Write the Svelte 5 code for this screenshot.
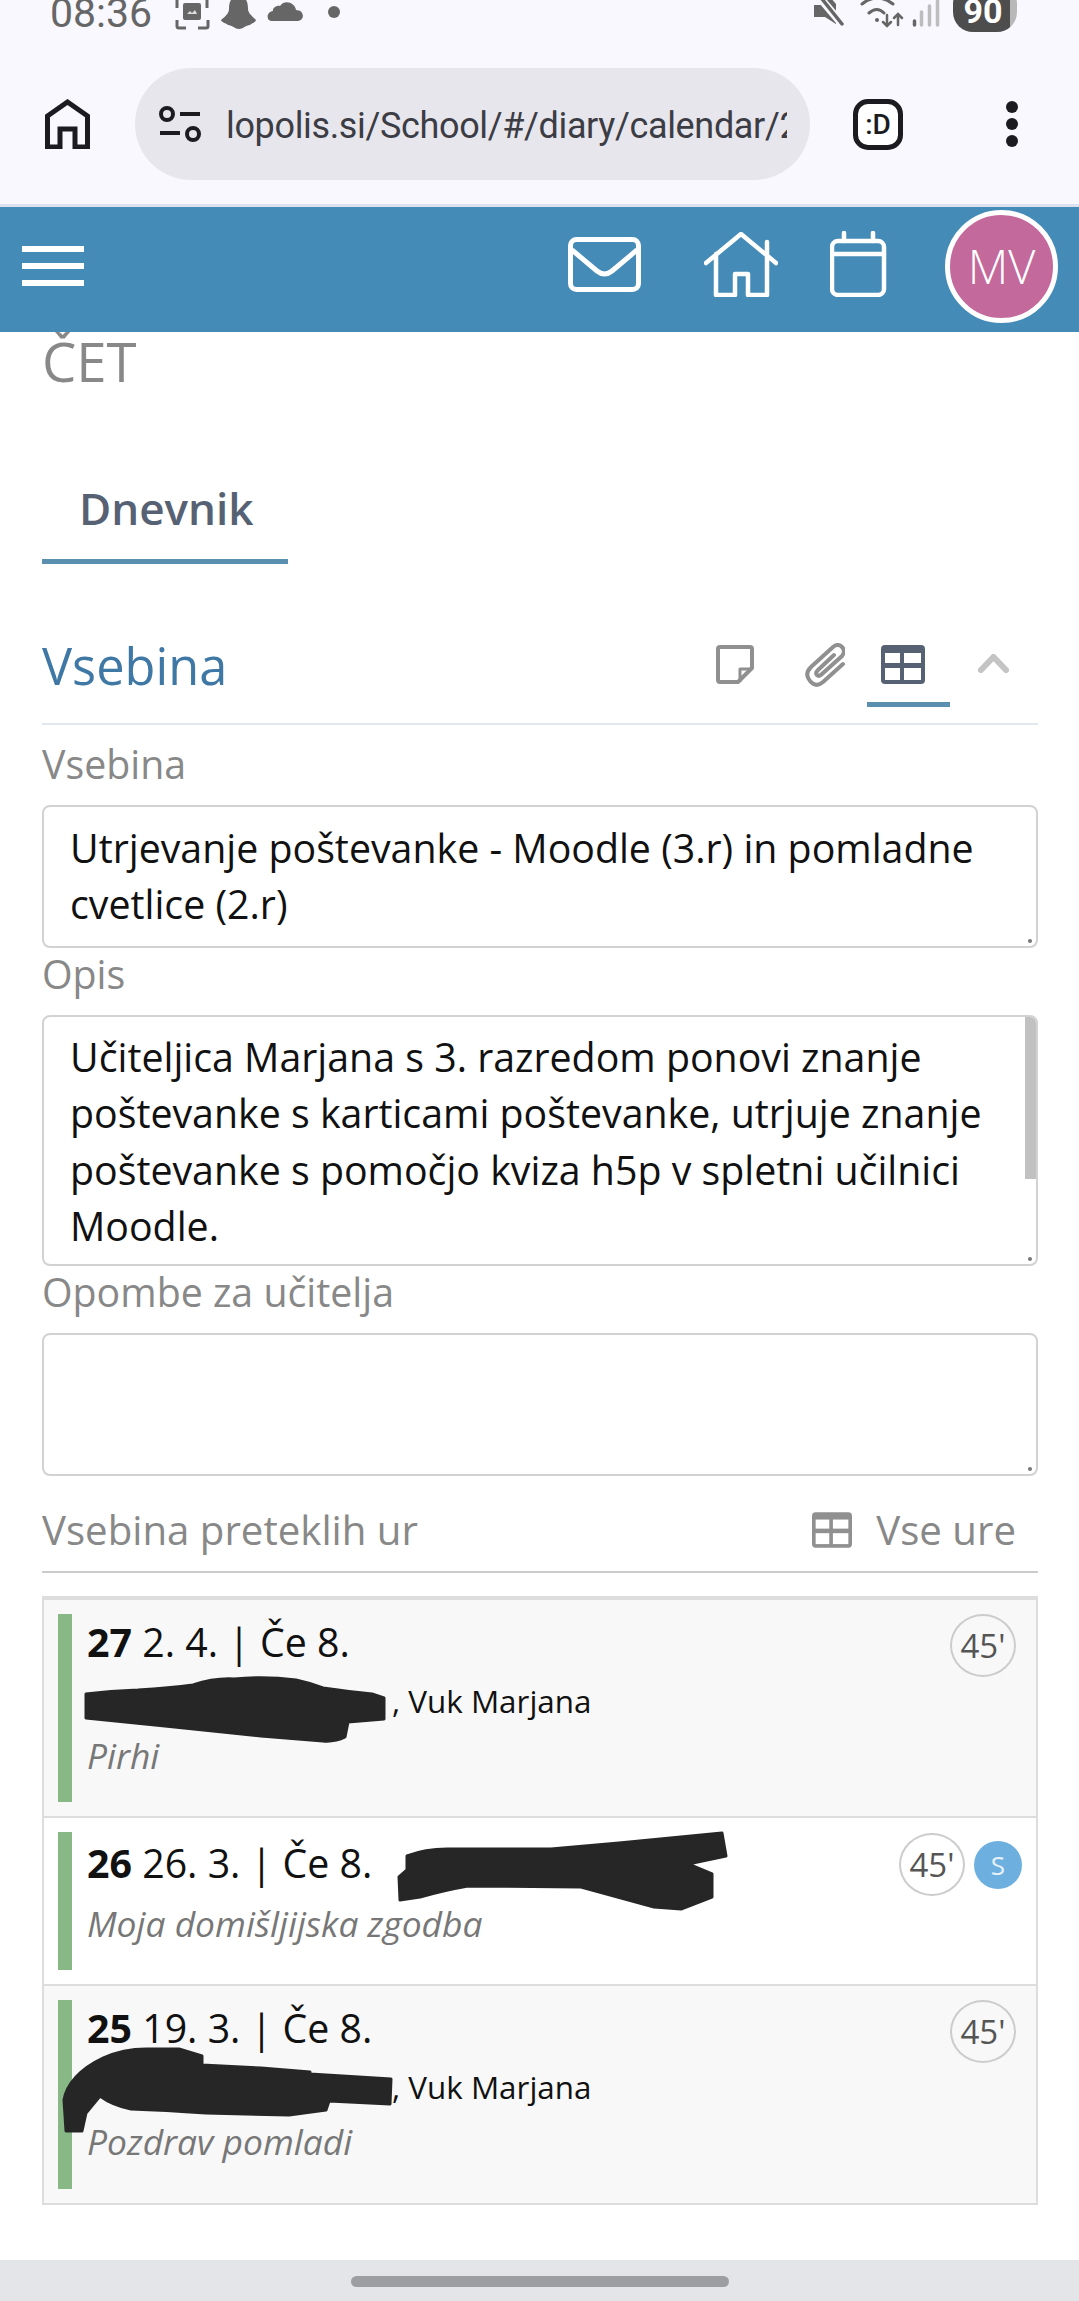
<script lang="ts">
  const lessons = [
    { num: 27, date: '2. 4. | Če 8.', names: ', Vuk Marjana', note: 'Pirhi', tint: true },
    { num: 26, date: '26. 3. | Če 8.', names: '', note: 'Moja domišljijska zgodba', tint: false, sub: true },
    { num: 25, date: '19. 3. | Če 8.', names: ', Vuk Marjana', note: 'Pozdrav pomladi', tint: true },
  ];
</script>

{#snippet gridIcon(cls: string)}
  <svg class={cls} viewBox="0 0 44 39">
    <rect class="grid-bg" width="44" height="39" rx="4" />
    <rect x="4" y="8" width="15" height="10" fill="#fff" />
    <rect x="23" y="8" width="17" height="10" fill="#fff" />
    <rect x="4" y="23" width="15" height="12" fill="#fff" />
    <rect x="23" y="23" width="17" height="12" fill="#fff" />
  </svg>
{/snippet}

<div class="page">
  <div class="chrome">
    <div class="status">
      <span class="time">08:36</span>
      <svg class="st shot" viewBox="175 0 34 29" fill="none" stroke="#666" stroke-width="3">
        <path d="M177 20v6q0 2 2 2h7M198 28h8q2 0 2-2v-6M177 8V0M207 8V0" />
        <rect x="183" y="3" width="18" height="17" rx="2" fill="#666" stroke="none" />
        <path d="M187 14l3-3 2 2 3-3 2 4z" fill="#ddd" stroke="none" />
      </svg>
      <svg class="st snap" viewBox="221 0 35 29">
        <path fill="#666" d="M239-4C231-4 229 2 229 9 229 13 226 16 221 20 222 23 226 23 228 25 232 25 235 29 239 29 243 29 246 25 250 25 252 23 255 23 256 20 252 16 248 13 248 9 248 2 246-4 239-4Z" />
      </svg>
      <svg class="st cloud" viewBox="268 0 35 22">
        <path fill="#666" d="M272 21H297C305 21 305 10 296 10 295 3 285-1 280 6 276 5 272 9 273 11 266 12 266 21 272 21Z" />
      </svg>
      <span class="dot"></span>

      <div class="st-right">
        <svg class="st mute" viewBox="814 0 30 27">
          <path fill="#666" d="M814 5H822L830-3 836 4V24L825 17H814Z" />
          <path d="M820-2 842 24" stroke="#f8f8fe" stroke-width="8" />
          <path d="M822-1 842 24" stroke="#666" stroke-width="3.5" stroke-linecap="round" />
        </svg>
        <svg class="st wifi" viewBox="858 0 44 28" fill="none" stroke="#666" stroke-width="3" stroke-linecap="round">
          <circle cx="877" cy="20" r="2" fill="#666" stroke="none" />
          <path d="M869 13Q877 6 884 13M862 4Q877-8 893 4" />
          <path d="M887 15V26M883 22l4 4 4-4M898 25V15M894 18l4-4 4 4" stroke-width="2.5" />
        </svg>
        <svg class="st signal" viewBox="912 0 28 27" stroke-width="3.5" stroke-linecap="round" fill="none">
          <path d="M914.5 21v4" stroke="#666" />
          <path d="M921.500 12v13M929.500 6v19M937.500 1v24" stroke="#bdbdbd" />
        </svg>
        <span class="battery">90</span>
      </div>
    </div>

    <div class="toolbar">
      <svg class="home" viewBox="45 100 45 50" fill="none" stroke="#1b1b20" stroke-width="5">
        <path d="M47.500 148V117L67.500 103 87.500 117V148H75V130H60V148Z" />
      </svg>
      <div class="omnibox">
        <svg class="tune" viewBox="159 107 42 36" fill="none" stroke="#1b1b20" stroke-width="4">
          <circle cx="167" cy="115" r="6" />
          <circle cx="193" cy="135" r="6" />
          <path d="M180 115H200M160 134H180" />
        </svg>
        <span class="url">lopolis.si/School/#/diary/calendar/2</span>
      </div>
      <span class="ext">:D</span>
      <div class="dots"><i></i><i></i><i></i></div>
    </div>
  </div>

  <header class="topbar">
    <div class="burger"><i></i><i></i><i></i></div>
    <svg class="ic mail" viewBox="568 237 73 55" fill="none" stroke="#fff" stroke-width="5">
      <rect x="570.500" y="239.500" width="68" height="50" rx="6" />
      <path d="M572 250 597 271Q604.500 277 612 271L637 250" />
    </svg>
    <svg class="ic house" viewBox="704 232 74 65" fill="none" stroke="#fff" stroke-width="4.500" stroke-linecap="round" stroke-linejoin="round">
      <path d="M706 263 741 234 776 263M716 254V295H735V274H748V295H767V242" />
    </svg>
    <svg class="ic cal" viewBox="830 231 58 66" fill="none" stroke="#fff" stroke-width="4.500" stroke-linecap="round">
      <rect x="832" y="241" width="52" height="54" rx="6" />
      <path d="M832 254H884M844 233V241M873 233V241" />
    </svg>
    <span class="avatar">MV</span>
  </header>

  <main>
    <h1>ČET</h1>

    <div class="tab">Dnevnik</div>

    <div class="sec-head">
      <h2>Vsebina</h2>
      <div class="tools">
        <svg class="t-note" viewBox="716 645 38 39" fill="none" stroke="#909090" stroke-width="4" stroke-linejoin="round">
          <path d="M718 649q0-2 2-2h30q2 0 2 2V668L738 682H720q-2 0-2-2Z" />
          <path d="M752 669H740V682" stroke-width="3" />
        </svg>
        <svg class="t-clip" viewBox="805 643 40 44" fill="none" stroke="#909090" stroke-width="4" stroke-linecap="round">
          <path d="M843 664 823 682Q816 688 810 681 804 674 811 667L833 647Q838 643 842 647 846 651 842 656L822 674Q819 677 817 675 815 673 818 670L834 655" />
        </svg>
        <div class="t-grid">{@render gridIcon('grid-dark')}</div>
        <svg class="t-chev" viewBox="978 654 31 19" fill="none" stroke="#c4c4c4" stroke-width="6" stroke-linecap="round">
          <path d="M981 670 993.500 657 1006 670" />
        </svg>
      </div>
    </div>

    <div class="label first">Vsebina</div>
    <div class="box b1">
      Utrjevanje poštevanke - Moodle (3.r) in pomladne cvetlice (2.r)
      <span class="grip"></span>
    </div>

    <div class="label">Opis</div>
    <div class="box b2">
      Učiteljica Marjana s 3. razredom ponovi znanje poštevanke s karticami poštevanke, utrjuje znanje poštevanke s pomočjo kviza h5p v spletni učilnici Moodle.
      <span class="thumb"></span>
      <span class="grip"></span>
    </div>

    <div class="label">Opombe za učitelja</div>
    <div class="box b1"><span class="grip"></span></div>

    <div class="past-head">
      <span>Vsebina preteklih ur</span>
      <div class="all">
        {@render gridIcon('grid-grey')}
        <span>Vse ure</span>
      </div>
    </div>

    <div class="list">
      {#each lessons as l}
        <div class="row" class:tint={l.tint} class:short={!l.names}>
          <span class="bar"></span>
          <div class="info">
            <div class="title"><b>{l.num}</b> {l.date}</div>
            {#if l.names}
              <div class="names"><span class="hidden-name"></span>{l.names}</div>
            {/if}
            <div class="note">{l.note}</div>
          </div>
          <div class="marks" class:has-sub={l.sub}>
            <span class="mins">45'</span>
            {#if l.sub}<span class="sub">S</span>{/if}
          </div>
        </div>
      {/each}
    </div>
  </main>

  <div class="navbar"><span class="pill"></span></div>

  <!-- marker scribbles drawn over the screenshot -->
  <svg class="scribbles" viewBox="0 0 1079 2301" fill="#262626" stroke="#262626" stroke-width="3" stroke-linejoin="round">
    <path d="M86 1694Q110 1691 138 1690 170 1688 193 1685 214 1678 234 1679 265 1676 296 1680 310 1683 323 1688 350 1692 372 1694L384 1698V1719L348 1722 345 1737Q335 1742 323 1741L261 1736 165 1726 86 1718Z" />
    <path d="M407 1856Q425 1849 447 1849H551L619 1843 722 1833 726 1856 688 1864 712 1874V1897L681 1909 654 1907 581 1887 468 1886Q445 1890 420 1897L400 1900 399 1877 407 1870Z" />
    <path d="M64 2100Q66 2088 76 2077 86 2066 103 2058 125 2048 151 2049H179L202 2056V2065L261 2068 310 2072V2074L391 2079 390 2104 329 2101 326 2110 289 2115 206 2113Q165 2110 131 2109 112 2105 100 2096L86 2113 82 2131H66Z" />
  </svg>
</div>

<style>
  :global(body) {
    margin: 0;
    background: #fff;
  }

  .page {
    position: relative;
    width: 1079px;
    height: 2301px;
    overflow: hidden;
    display: flex;
    flex-direction: column;
    font-family: "Open Sans", sans-serif;
    color: #111;
  }

  /* browser chrome */
  .chrome {
    background: #f8f8fe;
    border-bottom: 3px solid #dde3ee;
  }

  .status {
    height: 68px;
    display: flex;
    align-items: flex-start;
    padding-left: 50px;
    overflow: hidden;
    box-sizing: border-box;
  }

  .time {
    font: 400 41px/40px Roboto, sans-serif;
    color: #666;
    margin-top: -7px;
    width: 105px;
  }

  .st { display: block; overflow: visible; }
  .shot { width: 34px; height: 29px; margin-left: 20px; }
  .snap { width: 35px; height: 29px; margin-left: 12px; }
  .cloud { width: 35px; height: 22px; margin-left: 12px; }

  .dot {
    width: 12px;
    height: 12px;
    margin: 6px 0 0 25px;
    border-radius: 50%;
    background: #666;
  }

  .st-right {
    display: flex;
    align-items: flex-start;
    margin-left: auto;
    padding-right: 62px;
  }

  .mute { width: 30px; height: 27px; }
  .wifi { width: 44px; height: 28px; margin-left: 14px; }
  .signal { width: 28px; height: 27px; margin-left: 10px; }

  .battery {
    width: 64px;
    height: 48px;
    margin: -16px 0 0 13px;
    border-radius: 20px;
    background: linear-gradient(90deg, #4d4d4d 89%, #b8b8b8 89%);
    color: #fff;
    font: 700 34px/54px Roboto, sans-serif;
    text-align: center;
    padding-right: 4px;
    box-sizing: border-box;
  }

  .toolbar {
    height: 136px;
    padding: 0 0 24px 45px;
    box-sizing: border-box;
    display: flex;
    align-items: center;
  }

  .home { width: 45px; height: 50px; }

  .omnibox {
    width: 675px;
    height: 112px;
    margin-left: 45px;
    padding: 0 23px 0 24px;
    box-sizing: border-box;
    border-radius: 56px;
    background: #e6e6ec;
    display: flex;
    align-items: center;
    gap: 25px;
  }

  .tune { width: 42px; height: 36px; flex: none; }

  .url {
    flex: 1;
    overflow: hidden;
    white-space: nowrap;
    margin-top: 3px;
    font: 400 36px/50px Roboto, sans-serif;
    letter-spacing: -0.35px;
    color: #3c3c44;
  }

  .ext {
    width: 50px;
    height: 51px;
    margin-left: 43px;
    box-sizing: border-box;
    border: 5px solid #1b1b20;
    border-radius: 15px;
    background: #fff;
    color: #1b1b20;
    font: 500 28px/41px Roboto, sans-serif;
    text-align: center;
  }

  .dots {
    display: flex;
    flex-direction: column;
    gap: 5px;
    margin-left: 103px;
  }

  .dots i {
    width: 12px;
    height: 12px;
    border-radius: 50%;
    background: #1b1b20;
  }

  /* app header */
  .topbar {
    position: relative;
    z-index: 1;
    height: 125px;
    flex: none;
    background: #458bb7;
    display: flex;
    align-items: flex-start;
    padding-left: 22px;
  }

  .burger {
    display: flex;
    flex-direction: column;
    gap: 11px;
    margin-top: 39px;
  }

  .burger i {
    width: 62px;
    height: 6px;
    background: #fff;
  }

  .ic { display: block; }
  .mail { width: 73px; height: 55px; margin: 30px 0 0 484px; }
  .house { width: 74px; height: 65px; margin: 25px 0 0 63px; }
  .cal { width: 58px; height: 66px; margin: 24px 0 0 52px; }

  .avatar {
    width: 113px;
    height: 113px;
    margin: 3px 0 0 57px;
    box-sizing: border-box;
    border: 5px solid #fff;
    border-radius: 50%;
    background: #c4699b;
    color: #fff;
    font-size: 47px;
    font-weight: 300;
    line-height: 103px;
    text-align: center;
  }

  /* page content */
  main {
    flex: 1;
    padding: 0 41px 0 42px;
  }

  h1 {
    margin: -6px 0 0;
    font-size: 54.500px;
    font-weight: 400;
    line-height: 70px;
    color: #888;
  }

  .tab {
    width: 246px;
    box-sizing: border-box;
    padding: 82px 0 21px 37px;
    border-bottom: 5px solid #5a8fb0;
    font-size: 44px;
    font-weight: 600;
    line-height: 60px;
    color: #566273;
  }

  .sec-head {
    display: flex;
    align-items: flex-start;
    justify-content: space-between;
    padding: 67px 0 16px;
    border-bottom: 2px solid #e0e8ec;
  }

  h2 {
    margin: 0;
    font-size: 50.500px;
    font-weight: 400;
    line-height: 70px;
    color: #3f78a5;
  }

  .tools {
    display: flex;
    align-items: flex-start;
    height: 76px;
    margin-right: 29px;
  }

  .t-note { width: 38px; height: 39px; margin-top: 14px; }
  .t-clip { width: 40px; height: 44px; margin: 12px 0 0 51px; }
  .t-chev { width: 31px; height: 19px; margin: 23px 0 0 28px; }

  .t-grid {
    width: 83px;
    height: 76px;
    margin-left: 22px;
    box-sizing: border-box;
    padding: 14px 0 0 14px;
    border-bottom: 5px solid #5a8fb0;
  }

  .grid-dark { display: block; width: 44px; height: 39px; }
  .grid-dark .grid-bg { fill: #566273; }
  .grid-grey { display: block; width: 40px; height: 36px; }
  .grid-grey .grid-bg { fill: #909090; }

  .label {
    margin-bottom: 15px;
    font-size: 39.300px;
    line-height: 52px;
    color: #888;
  }

  .label.first { margin-top: 13px; }

  .box {
    position: relative;
    box-sizing: border-box;
    padding: 13px 26px;
    border: 2px solid #d2d2d2;
    border-radius: 8px;
    font-size: 39.300px;
    line-height: 56.400px;
    color: #111;
    overflow: hidden;
  }

  .b1 { height: 143px; }
  .b2 { height: 251px; padding-top: 12px; padding-right: 30px; }

  .thumb {
    position: absolute;
    top: 0;
    right: 0;
    width: 11px;
    height: 162px;
    background: #c1c1c1;
  }

  .grip {
    position: absolute;
    right: 4px;
    bottom: 3px;
    width: 4px;
    height: 4px;
    border-radius: 50%;
    background: #777;
  }

  .past-head {
    display: flex;
    justify-content: space-between;
    margin-top: 28px;
    padding: 0 22px 15px 0;
    border-bottom: 2px solid #ccc;
    font-size: 40.200px;
    line-height: 52px;
    color: #888;
  }

  .all {
    display: flex;
    align-items: center;
    gap: 24px;
  }

  .list {
    margin-top: 23px;
    border: 2px solid #ddd;
    border-top-width: 4px;
  }

  .row {
    height: 218px;
    box-sizing: border-box;
    padding: 14px 0 14px 14px;
    display: flex;
    border-bottom: 2px solid #ddd;
  }

  .row:last-child { border-bottom: 0; height: 217px; }
  .row.short { height: 168px; }
  .row.tint { background: #f8f8f8; }

  .bar {
    width: 14px;
    margin-right: 15px;
    background: #88b885;
  }

  .info { padding-top: 3px; }
  .short .info { padding-top: 6px; }

  .title {
    font-size: 39.300px;
    line-height: 50px;
  }

  .title b { font-weight: 700; }

  .names {
    margin-top: 12px;
    font-size: 31.400px;
    line-height: 44px;
  }

  .hidden-name {
    display: inline-block;
    width: 305px;
  }

  .note {
    margin-top: 10px;
    font-size: 35.400px;
    font-style: italic;
    line-height: 44px;
    color: #777;
  }

  .short .note { margin-top: 13px; }

  .marks {
    display: flex;
    align-items: center;
    gap: 9px;
    align-self: flex-start;
    margin: 0 20px 0 auto;
  }

  .marks.has-sub { margin-right: 14px; margin-top: 1px; }

  .mins {
    width: 66px;
    height: 63px;
    box-sizing: border-box;
    border: 2px solid #ccc;
    border-radius: 50%;
    font-size: 33px;
    line-height: 59px;
    text-align: center;
    color: #555;
  }

  .sub {
    width: 48px;
    height: 48px;
    border-radius: 50%;
    background: #6db0df;
    color: #e6f1f8;
    font-size: 26px;
    line-height: 48px;
    text-align: center;
  }

  .navbar {
    flex: none;
    height: 41px;
    background: #e4e5e9;
    display: flex;
    justify-content: center;
    padding-top: 16px;
    box-sizing: border-box;
  }

  .pill {
    width: 378px;
    height: 11px;
    border-radius: 6px;
    background: #9d9ea2;
  }

  .scribbles {
    position: absolute;
    top: 0;
    left: 0;
    width: 1079px;
    height: 2301px;
    z-index: 2;
    pointer-events: none;
  }
</style>
